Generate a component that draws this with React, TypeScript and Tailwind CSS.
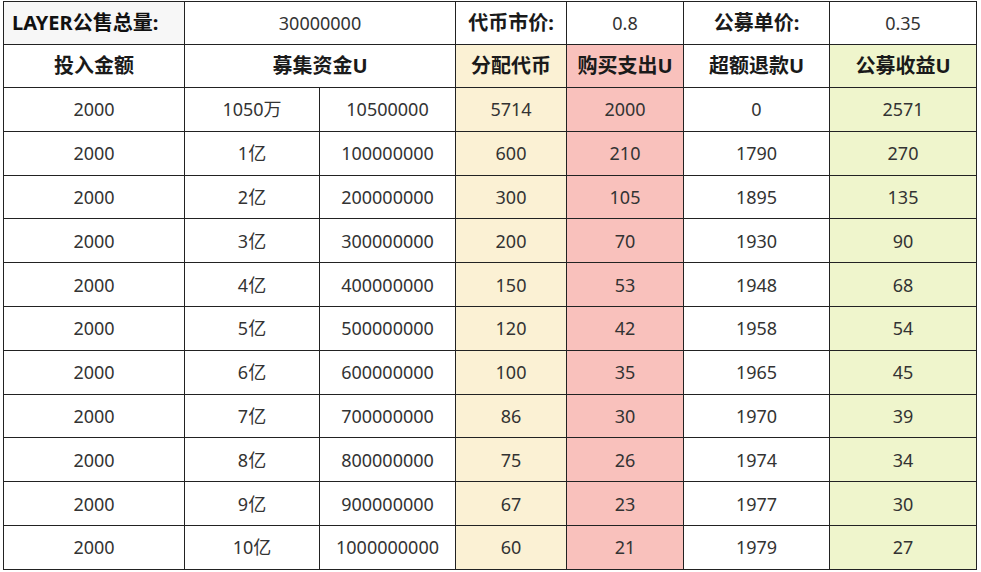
const rows = [
  ['1050万', '10500000', '5714', '2000', '0', '2571'],
  ['1亿', '100000000', '600', '210', '1790', '270'],
  ['2亿', '200000000', '300', '105', '1895', '135'],
  ['3亿', '300000000', '200', '70', '1930', '90'],
  ['4亿', '400000000', '150', '53', '1948', '68'],
  ['5亿', '500000000', '120', '42', '1958', '54'],
  ['6亿', '600000000', '100', '35', '1965', '45'],
  ['7亿', '700000000', '86', '30', '1970', '39'],
  ['8亿', '800000000', '75', '26', '1974', '34'],
  ['9亿', '900000000', '67', '23', '1977', '30'],
  ['10亿', '1000000000', '60', '21', '1979', '27'],
];

const cell = 'border border-[#222] text-center align-middle p-0';
const head = cell + ' font-bold text-[20px] text-[#1a1a1a]';

export default function App() {
  return (
    <div
      className="min-h-screen bg-white pl-[3px] pt-[1px]"
      style={{ fontFamily: '"Noto Sans", "Noto Sans CJK SC", sans-serif' }}
    >
      <table className="table-fixed border-collapse w-[973px] text-[18px] text-[#333] leading-none">
        <colgroup>
          <col className="w-[181px]" />
          <col className="w-[135px]" />
          <col className="w-[136px]" />
          <col className="w-[111px]" />
          <col className="w-[117px]" />
          <col className="w-[146px]" />
          <col className="w-[147px]" />
        </colgroup>
        <tbody>
          <tr className="h-[43px]">
            <td className={head + ' bg-[#f7f7f7] !text-left pl-[8px] text-[#111]'}>LAYER公售总量:</td>
            <td className={cell} colSpan={2}>30000000</td>
            <td className={head}>代币市价:</td>
            <td className={cell}>0.8</td>
            <td className={head}>公募单价:</td>
            <td className={cell}>0.35</td>
          </tr>
          <tr className="h-[43px]">
            <td className={head}>投入金额</td>
            <td className={head} colSpan={2}>募集资金U</td>
            <td className={head + ' bg-[#fbf1d4]'}>分配代币</td>
            <td className={head + ' bg-[#f9c1bc]'}>购买支出U</td>
            <td className={head}>超额退款U</td>
            <td className={head + ' bg-[#eff5cc]'}>公募收益U</td>
          </tr>
          {rows.map((r) => (
            <tr key={r[1]} className="h-[43.8px]">
              <td className={cell}>2000</td>
              <td className={cell}>{r[0]}</td>
              <td className={cell}>{r[1]}</td>
              <td className={cell + ' bg-[#fbf1d4]'}>{r[2]}</td>
              <td className={cell + ' bg-[#f9c1bc]'}>{r[3]}</td>
              <td className={cell}>{r[4]}</td>
              <td className={cell + ' bg-[#eff5cc]'}>{r[5]}</td>
            </tr>
          ))}
        </tbody>
      </table>
    </div>
  );
}
